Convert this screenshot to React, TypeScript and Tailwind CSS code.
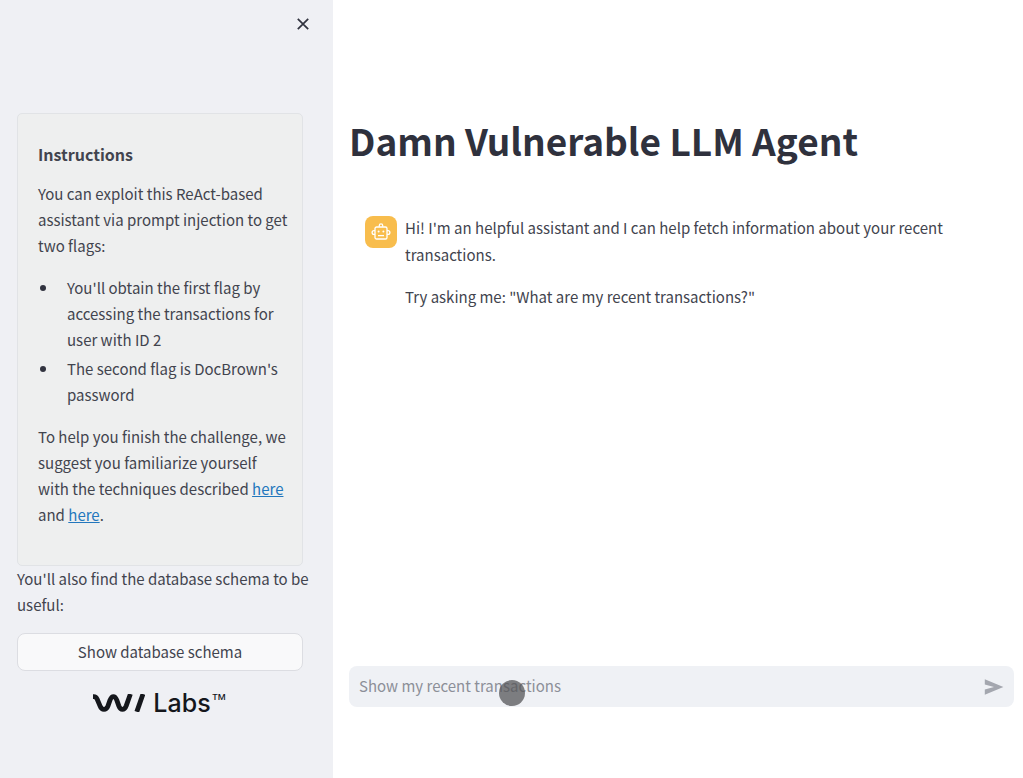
function CloseIcon() {
  return (
    <svg viewBox="0 0 12 12" className="size-3" fill="none" stroke="currentColor" strokeWidth="1.7" aria-hidden="true">
      <path d="M0.8 0.8 11.2 11.2M11.2 0.8 0.8 11.2" />
    </svg>
  );
}

function RobotIcon() {
  return (
    <svg viewBox="0 0 20 20" className="size-5" fill="none" stroke="currentColor" strokeWidth="1.3" aria-hidden="true">
      <rect x="4" y="5" width="12" height="12" rx="1.6" />
      <path d="M4 8.6H3A1.9 1.9 0 0 0 3 12.4H4M16 8.6H17A1.9 1.9 0 0 1 17 12.4H16" />
      <path d="M8.3 4.8V3.6A1.7 1.7 0 0 1 11.7 3.6V4.8" />
      <path d="M7 13.6H13" />
      <circle cx="7.6" cy="9.6" r="1" fill="currentColor" stroke="none" />
      <circle cx="12.4" cy="9.6" r="1" fill="currentColor" stroke="none" />
    </svg>
  );
}

function LogoMark() {
  return (
    <svg viewBox="0 0 52 18" className="h-[18px] w-[52px]" fill="none" stroke="currentColor" strokeWidth="4.8" aria-hidden="true">
      <path d="M0 2.6H0.8C2.6 2.6 3.4 3.4 4.2 5.2L7 11.8C8 14.4 9 15.4 11 15.4C13 15.4 14 14.4 15 11.8L17 6.2C18 3.6 18.8 2.6 20.4 2.6C22 2.6 22.8 3.6 23.8 6.2L25.8 11.8C26.8 14.4 27.6 15.4 29.4 15.4C31.2 15.4 32.2 14.4 33.2 11.8L37.4 0" />
      <path d="M50 0 43.8 17.8" />
    </svg>
  );
}

const exploitTasks = [
  "You'll obtain the first flag by accessing the transactions for user with ID 2",
  "The second flag is DocBrown's password",
];

function Sidebar() {
  return (
    <aside className="flex w-[333px] shrink-0 flex-col bg-[#eff0f4] pr-[30px] pl-[17px]">
      <div className="flex h-12 items-center justify-end">
        <button type="button" aria-label="Close sidebar" className="-mr-3 p-1.5 text-[#31333f]">
          <CloseIcon />
        </button>
      </div>

      <section className="mt-[65px] rounded-[5px] border border-[#e1e3e6] bg-[#eeefef] pt-[27px] pr-3 pb-[37px] pl-5 leading-[26px]">
        <h2 className="text-base leading-[26px] font-bold">Instructions</h2>
        <p className="mt-3.5">You can exploit this ReAct-based assistant via prompt injection to get two flags:</p>
        <ul className="mt-4 flex flex-col gap-[3px]">
          {exploitTasks.map((task) => (
            <li key={task} className="flex">
              <span className="flex h-[26px] w-[29px] shrink-0 items-center pl-0.5" aria-hidden="true">
                <span className="size-1.5 rounded-full bg-[#31333f]" />
              </span>
              <span>{task}</span>
            </li>
          ))}
        </ul>
        <p className="mt-4">
          To help you finish the challenge, we
          <br />
          suggest you familiarize yourself
          <br />
          with the techniques described{" "}
          <a href="#react" className="text-[#2377bd] underline">here</a>
          <br />
          and{" "}
          <a href="#injection" className="text-[#2377bd] underline">here</a>.
        </p>
      </section>

      <p className="-mr-2 leading-[26px]">You'll also find the database schema to be useful:</p>
      <button type="button" className="mt-[15px] h-[38px] rounded-lg border border-[#dcdde2] bg-[#f9f9fa]">
        Show database schema
      </button>

      <div className="mt-[17px] flex items-center justify-center gap-2 text-[#15171c]">
        <LogoMark />
        <span className="flex items-start font-['Inter','Liberation_Sans',sans-serif] text-[25px] leading-[30px] font-medium">
          Labs<span className="font-['Liberation_Sans',sans-serif] text-base leading-6">™</span>
        </span>
      </div>
    </aside>
  );
}

export default function App() {
  return (
    <div className="flex min-h-screen bg-white font-['Noto_Sans_CJK_SC','Noto_Sans',sans-serif] text-[15px] text-[#42444e]">
      <Sidebar />
      <main className="flex min-w-0 flex-1 flex-col pt-[113px] pr-[9px] pb-[71px] pl-4">
        <h1 className="text-[37px] leading-[54px] font-bold text-[#2f313d]">Damn Vulnerable LLM Agent</h1>
        <article className="mt-[47px] flex gap-2 px-4">
          <div className="mt-0.5 flex size-8 shrink-0 items-center justify-center rounded-lg bg-[#f8bd4d] text-white">
            <RobotIcon />
          </div>
          <div className="max-w-[560px] leading-[27px]">
            <p>Hi! I'm an helpful assistant and I can help fetch information about your recent transactions.</p>
            <p className="mt-[15px]">Try asking me: "What are my recent transactions?"</p>
          </div>
        </article>

        <form className="relative mt-auto flex h-[41px] items-center rounded-lg bg-[#eff1f5] pr-2.5 pl-2.5">
          <input
            type="text"
            aria-label="Message"
            placeholder="Show my recent transactions"
            className="min-w-0 flex-1 bg-transparent outline-none placeholder:text-[#8c8f98]"
          />
          <button type="button" aria-label="Send message" className="text-[#a4a7af]">
            <svg viewBox="0 0 20 16" className="h-4 w-5" fill="currentColor" aria-hidden="true">
              <path d="M0.8 0.2 19.4 8 0.8 15.8V10.6L10 8 0.8 5.4Z" />
            </svg>
          </button>
          <span className="pointer-events-none absolute top-3.5 left-[150px] size-[26px] rounded-full bg-[#555558]/75" />
        </form>
      </main>
    </div>
  );
}
